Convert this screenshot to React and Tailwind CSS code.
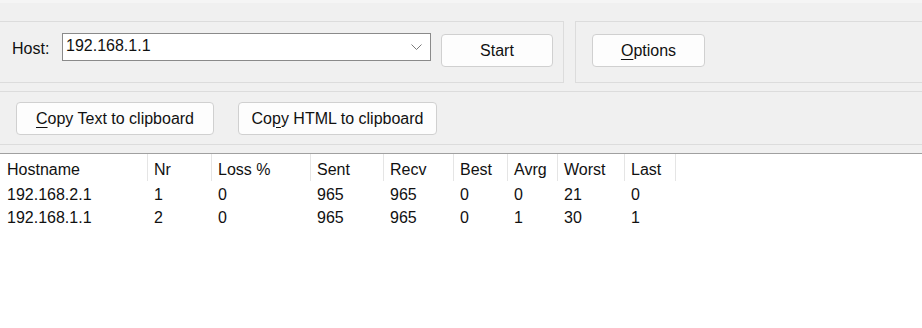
import React from "react";

const cols = [
  { name: "Hostname", w: "w-[148px]", pl: "pl-[7px]" },
  { name: "Nr", w: "w-[64px]", pl: "pl-[6px]" },
  { name: "Loss %", w: "w-[99px]", pl: "pl-[6px]" },
  { name: "Sent", w: "w-[73px]", pl: "pl-[6px]" },
  { name: "Recv", w: "w-[70px]", pl: "pl-[6px]" },
  { name: "Best", w: "w-[54px]", pl: "pl-[6px]" },
  { name: "Avrg", w: "w-[50px]", pl: "pl-[6px]" },
  { name: "Worst", w: "w-[67px]", pl: "pl-[6px]" },
  { name: "Last", w: "w-[51px]", pl: "pl-[6px]" },
];

const rows = [
  ["192.168.2.1", "1", "0", "965", "965", "0", "0", "21", "0"],
  ["192.168.1.1", "2", "0", "965", "965", "0", "1", "30", "1"],
];

function Btn({ className, children }) {
  return (
    <div
      className={
        "flex items-center justify-center rounded-[4px] border border-[#d0d0d0] bg-[#fdfdfd] " +
        className
      }
    >
      {children}
    </div>
  );
}

export default function App() {
  return (
    <div className="w-[922px] h-[328px] overflow-hidden bg-[#f0f0f0] text-[16px] text-[#111111] font-['Liberation_Sans',Arial,sans-serif] flex flex-col">
      <div className="h-[3px] bg-[#f5f5f5] shrink-0" />
      {/* Row 1 */}
      <div className="mt-[18px] flex h-[62px] shrink-0">
        <div className="-ml-[2px] w-[566px] h-full border border-[#dcdcdc] flex items-start">
          <div className="pl-[13px] w-[63px] mt-[18px] leading-[18px] shrink-0">Host:</div>
          <div className="mt-[11px] w-[369px] h-[28px] border border-[#8a8a8a] bg-white flex items-center pb-[2px] pl-[3px] pr-[8px] shrink-0">
            <span className="flex-1 leading-[18px]">192.168.1.1</span>
            <svg width="11" height="6" viewBox="0 0 11 6" className="mt-[1px]">
              <polyline points="0.5,0.5 5.5,5.5 10.5,0.5" fill="none" stroke="#7a7a7a" strokeWidth="1" />
            </svg>
          </div>
          <Btn className="ml-[10px] mt-[12px] w-[112px] h-[33px] shrink-0">Start</Btn>
        </div>
        <div className="ml-[11px] -mr-[2px] flex-1 h-full border border-[#dcdcdc] flex items-start">
          <Btn className="ml-[16px] mt-[12px] w-[113px] h-[33px] shrink-0">
            <span>
              <span className="underline underline-offset-[3px]">O</span>ptions
            </span>
          </Btn>
        </div>
      </div>
      {/* Row 2 */}
      <div className="mt-[8px] -mx-[2px] h-[54px] shrink-0 border border-[#dcdcdc] flex items-start">
        <Btn className="ml-[17px] mt-[10px] w-[198px] h-[33px] shrink-0">
          <span>
            <span className="underline underline-offset-[3px]">C</span>opy Text to clipboard
          </span>
        </Btn>
        <Btn className="ml-[24px] mt-[10px] w-[199px] h-[33px] shrink-0">
          <span>
            Co<span className="underline underline-offset-[3px]">p</span>y HTML to clipboard
          </span>
        </Btn>
      </div>
      {/* Table */}
      <div className="mt-[8px] flex-1 border-t border-[#a0a0a0] bg-white">
        <div className="flex h-[27px]">
          {cols.map((c) => (
            <div
              key={c.name}
              className={c.w + " " + c.pl + " shrink-0 border-r border-[#e5e5e5] pt-[7px] leading-[18px] whitespace-nowrap"}
            >
              {c.name}
            </div>
          ))}
        </div>
        {rows.map((r, i) => (
          <div key={i} className="flex h-[23px]">
            {r.map((v, j) => (
              <div
                key={j}
                className={cols[j].w + " " + cols[j].pl + " shrink-0 pt-[5px] leading-[18px] whitespace-nowrap"}
              >
                {v}
              </div>
            ))}
          </div>
        ))}
      </div>
    </div>
  );
}
